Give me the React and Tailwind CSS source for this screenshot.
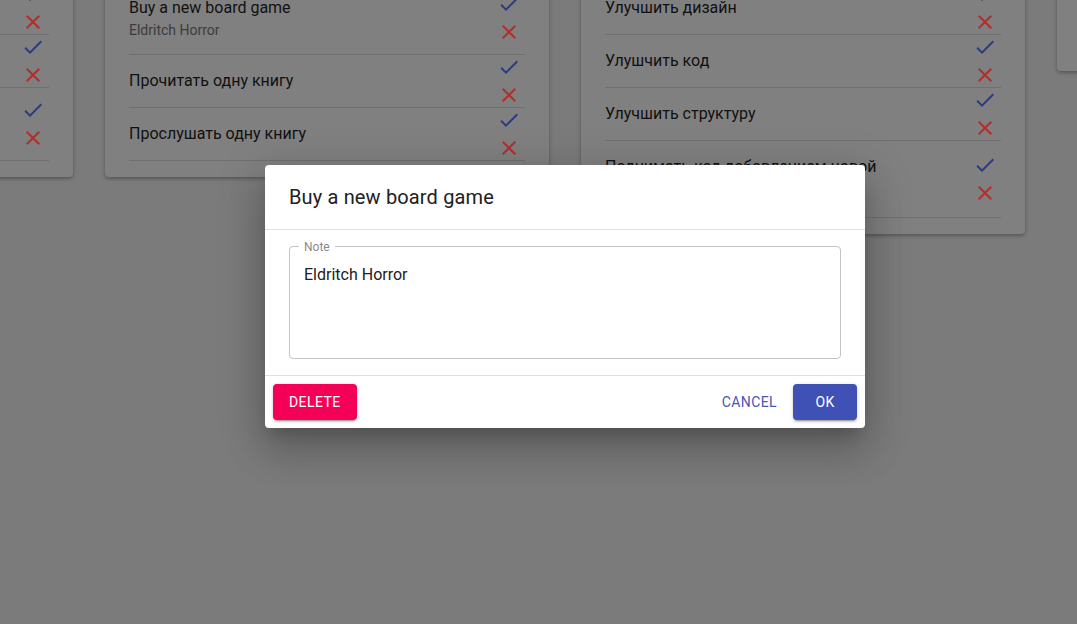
import React from "react";

const CheckIcon = () => (
  <svg viewBox="0 0 24 24" className="w-6 h-6 fill-[#2b3a82]">
    <path d="M9 16.17L4.83 12l-1.42 1.41L9 19 21 7l-1.41-1.41z" />
  </svg>
);

const CloseIcon = () => (
  <svg viewBox="0 0 24 24" className="w-6 h-6 fill-[#b32d2d]">
    <path d="M19 6.41L17.59 5 12 10.59 6.41 5 5 6.41 10.59 12 5 17.59 6.41 19 12 13.41 17.59 19 19 17.59 13.41 12z" />
  </svg>
);

const columns = [
  [
    { title: "Сделать зарядку" },
    { title: "Выучить новое слово" },
    { title: "Посмотреть фильм", note: "Что-нибудь новое" },
  ],
  [
    { title: "Buy a new board game", note: "Eldritch Horror" },
    { title: "Прочитать одну книгу" },
    { title: "Прослушать одну книгу" },
  ],
  [
    { title: "Улучшить дизайн" },
    { title: "Улушчить код" },
    { title: "Улучшить структуру" },
    { title: "Поднимать код добавлением новой функциональности" },
  ],
  [{ title: "Сходить в театр", note: "Билеты" }],
];

const TaskRow = ({ task }) => (
  <div className="flex items-center border-b border-[#6f6f6f]">
    <div className="flex-1 py-[14px] pr-2">
      <p className="text-base leading-6 text-[#111111]">{task.title}</p>
      {task.note && <p className="text-sm leading-5 text-[#3c3c3c]">{task.note}</p>}
    </div>
    <div className="flex flex-col -my-1">
      <button className="w-8 h-7 flex items-center justify-center">
        <CheckIcon />
      </button>
      <button className="w-8 h-7 flex items-center justify-center">
        <CloseIcon />
      </button>
    </div>
  </div>
);

export default function App() {
  return (
    <div
      className="relative w-screen h-[624px] overflow-hidden bg-[#7b7b7b]"
      style={{ fontFamily: "Roboto, 'Noto Sans', sans-serif" }}
    >
      {/* Board (dimmed by the open dialog) */}
      <div className="flex items-start gap-8 -ml-[371px] -mt-[18px]">
        {columns.map((tasks, i) => (
          <div
            key={i}
            className="w-[444px] shrink-0 bg-[#808080] rounded px-6 pb-4 shadow-[0_2px_3px_rgba(0,0,0,0.2),0_1px_6px_rgba(0,0,0,0.12)]"
          >
            {tasks.map((t) => (
              <TaskRow key={t.title} task={t} />
            ))}
          </div>
        ))}
      </div>

      {/* Dialog */}
      <div className="absolute left-[265px] top-[165px] w-[600px] bg-white rounded shadow-[0_11px_15px_-7px_rgba(0,0,0,0.2),0_24px_38px_3px_rgba(0,0,0,0.14),0_9px_46px_8px_rgba(0,0,0,0.12)]">
        <h2 className="px-6 py-4 text-xl leading-8 font-normal text-[#212121] tracking-[0.0075em]">
          Buy a new board game
        </h2>
        <div className="border-y border-[#e0e0e0] px-6 py-4">
          <div className="relative h-[113px] border border-[#c4c4c4] rounded px-[14px] pt-[18px]">
            <span className="absolute -top-[8px] left-[9px] px-[5px] bg-white text-xs leading-4 text-[#8a8a8a]">
              Note
            </span>
            <p className="text-base leading-5 text-[#212121]">Eldritch Horror</p>
          </div>
        </div>
        <div className="flex items-center p-2">
          <button className="h-9 px-4 rounded bg-[#f50057] text-white text-sm font-normal uppercase tracking-[0.02857em] shadow-[0_3px_1px_-2px_rgba(0,0,0,0.2),0_2px_2px_rgba(0,0,0,0.14),0_1px_5px_rgba(0,0,0,0.12)]">
            Delete
          </button>
          <div className="flex-1" />
          <button className="h-9 px-2 rounded text-[#4a55b8] text-sm font-normal uppercase tracking-[0.02857em]">
            Cancel
          </button>
          <button className="ml-2 h-9 w-16 rounded bg-[#3f51b5] text-white text-sm font-normal uppercase tracking-[0.02857em] shadow-[0_3px_1px_-2px_rgba(0,0,0,0.2),0_2px_2px_rgba(0,0,0,0.14),0_1px_5px_rgba(0,0,0,0.12)]">
            OK
          </button>
        </div>
      </div>
    </div>
  );
}
